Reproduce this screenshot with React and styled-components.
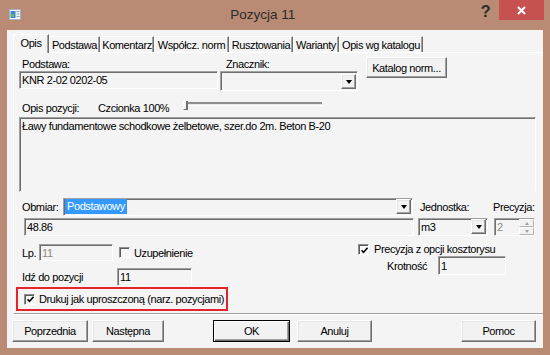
import styled, { createGlobalStyle, css } from "styled-components"

const GlobalStyle = createGlobalStyle`
    * { box-sizing: border-box; }
    body {
        margin: 0;
        font-family: "Liberation Sans", Arial, sans-serif;
        font-size: 11px;
        letter-spacing: -0.4px;
        color: #000;
    }
`

const tabs = [
    { label: "Opis", w: 36 },
    { label: "Podstawa", w: 51 },
    { label: "Komentarz", w: 54 },
    { label: "Współcz. norm", w: 75 },
    { label: "Rusztowania", w: 64 },
    { label: "Warianty", w: 46 },
    { label: "Opis wg katalogu", w: 84 },
]

const CheckMark = () => (
    <svg width="7" height="7" viewBox="0 0 7 7">
        <path d="M0.5 3.2 L2.5 5.4 L6.5 0.8" fill="none" stroke="#000" strokeWidth="1.6" />
    </svg>
)

const Check = ({ checked }) => <CheckBox>{checked && <CheckMark />}</CheckBox>

const Drop = () => (
    <DropButton>
        <Arrow />
    </DropButton>
)

const App = () => {
    return (
        <>
            <GlobalStyle />
            <Window>
                <TitleBar>
                    <AppIcon width="12" height="11" viewBox="0 0 12 11">
                        <rect x="0.5" y="0.5" width="11" height="10" fill="#f4f6f8" stroke="#9fb3c4" />
                        <rect x="1.5" y="2" width="5" height="7" fill="#3f86c8" />
                        <rect x="2" y="5" width="3" height="3" fill="#5fb870" />
                        <rect x="7.5" y="2" width="3" height="1" fill="#7fa6c6" />
                        <rect x="7.5" y="4.5" width="3" height="1" fill="#7fa6c6" />
                        <rect x="7.5" y="7" width="3" height="1" fill="#7fa6c6" />
                    </AppIcon>
                    <Title>Pozycja 11</Title>
                    <Help>?</Help>
                    <CloseButton>
                        <svg width="9" height="9" viewBox="0 0 9 9">
                            <path d="M1 1 L8 8 M8 1 L1 8" stroke="#fff" strokeWidth="2" />
                        </svg>
                    </CloseButton>
                </TitleBar>
                <Client>
                    <TabStrip>
                        {tabs.map((t, i) => (
                            <Tab key={t.label} $width={t.w} $active={i === 0}>{t.label}</Tab>
                        ))}
                    </TabStrip>
                    <Panel>
                        <Row $align="flex-start">
                            <Group $width={199}>
                                <Label $pad={3}>Podstawa:</Label>
                                <Field $width={199} $height={18}>KNR 2-02 0202-05</Field>
                            </Group>
                            <Group $width={138} $ml={2}>
                                <Label $pad={6}>Znacznik:</Label>
                                <Combo $width={138} $height={20}>
                                    <span />
                                    <Drop />
                                </Combo>
                            </Group>
                            <Button $width={81} $height={21} $ml={8}>Katalog norm...</Button>
                        </Row>
                        <Row $mt={10} $align="flex-start">
                            <Label $pad={3} $width={79}>Opis pozycji:</Label>
                            <Label $width={87}>Czcionka 100%</Label>
                            <Slider>
                                <Thumb />
                            </Slider>
                        </Row>
                        <TextArea>Ławy fundamentowe schodkowe żelbetowe, szer.do 2m. Beton B-20</TextArea>
                        <Row $mt={6}>
                            <Label $pad={3} $width={44}>Obmiar:</Label>
                            <Combo $width={350} $height={18} $align="center">
                                <Selected>Podstawowy</Selected>
                                <Drop />
                            </Combo>
                            <Label $ml={7} $width={73}>Jednostka:</Label>
                            <Label>Precyzja:</Label>
                        </Row>
                        <Row $mt={2}>
                            <Field $width={390} $height={18} $ml={5}>48.86</Field>
                            <Combo $width={70} $height={18} $ml={4} $align="center">
                                <span>m3</span>
                                <Drop />
                            </Combo>
                            <Spinner>
                                <SpinValue>2</SpinValue>
                                <SpinButtons>
                                    <SpinButton><SpinArrow $up /></SpinButton>
                                    <SpinButton><SpinArrow /></SpinButton>
                                </SpinButtons>
                            </Spinner>
                        </Row>
                        <Row $mt={8} $align="flex-start">
                            <Column $width={209}>
                                <Row>
                                    <Label $pad={3} $width={20}>Lp.</Label>
                                    <Field $width={74} $height={17} $muted>11</Field>
                                    <CheckItem $ml={6}>
                                        <Check />
                                        <span>Uzupełnienie</span>
                                    </CheckItem>
                                </Row>
                                <Row $mt={7}>
                                    <Label $pad={3} $width={98}>Idź do pozycji</Label>
                                    <Field $width={75} $height={18}>11</Field>
                                </Row>
                                <Highlight>
                                    <CheckItem>
                                        <Check checked />
                                        <span>Drukuj jak uproszczoną (narz. pozycjami)</span>
                                    </CheckItem>
                                </Highlight>
                            </Column>
                            <Column $ml={130}>
                                <CheckItem $tight>
                                    <Check checked />
                                    <span>Precyzja z opcji kosztorysu</span>
                                </CheckItem>
                                <Row $mt={1}>
                                    <Label $ml={29} $width={51}>Krotność</Label>
                                    <Field $width={68} $height={19}>1</Field>
                                </Row>
                            </Column>
                        </Row>
                    </Panel>
                    <ButtonBar>
                        <Button $width={76} $ml={5}>Poprzednia</Button>
                        <Button $width={72} $ml={4}>Następna</Button>
                        <Button $width={77} $ml={49} $primary>OK</Button>
                        <Button $width={75} $ml={7}>Anuluj</Button>
                        <Button $width={75} $ml={89}>Pomoc</Button>
                    </ButtonBar>
                </Client>
            </Window>
        </>
    )
}

export default App

const sunken = css`
    border: 1px solid;
    border-color: #a0a0a0 #ffffff #ffffff #a0a0a0;
    box-shadow: inset 1px 1px 0 #6d6d6d;
`

const raised = css`
    border: 1px solid;
    border-color: #ffffff #6d6d6d #6d6d6d #ffffff;
    box-shadow: inset -1px -1px 0 #a0a0a0, inset 1px 1px 0 #e6e6e6;
    background: #f2f2f2;
`

const Window = styled.div`
    width: 550px;
    height: 355px;
    background: #b98a74;
    display: flex;
    flex-direction: column;
    overflow: hidden;
`

const TitleBar = styled.div`
    height: 30px;
    flex-shrink: 0;
    display: flex;
    align-items: flex-start;
`

const AppIcon = styled.svg`
    margin: 9px 0 0 9px;
    flex-shrink: 0;
`

const Title = styled.div`
    flex: 1;
    text-align: center;
    padding-left: 24px;
    line-height: 30px;
    font-size: 13.5px;
    letter-spacing: 0;
    color: #2b2b2b;
`

const Help = styled.div`
    margin: 4px 9px 0 0;
    font-size: 16px;
    font-weight: bold;
    line-height: 16px;
    color: #2a2a2a;
`

const CloseButton = styled.div`
    width: 45px;
    height: 20px;
    margin-right: 6px;
    background: #c75050;
    display: flex;
    align-items: center;
    justify-content: center;
`

const Client = styled.div`
    margin: 0 7px;
    height: 318px;
    background: #f4f4f4;
    display: flex;
    flex-direction: column;
`

const TabStrip = styled.div`
    height: 22px;
    display: flex;
    align-items: flex-end;
    padding-left: 6px;
`

const Tab = styled.div`
    position: relative;
    z-index: ${(p) => (p.$active ? 1 : 0)};
    width: ${(p) => p.$width}px;
    height: ${(p) => (p.$active ? 19 : 16)}px;
    margin-bottom: ${(p) => (p.$active ? -1 : 0)}px;
    background: #f4f4f4;
    border-top: 1px solid #ffffff;
    border-left: 1px solid #ffffff;
    border-right: 1px solid #6d6d6d;
    box-shadow: inset -1px 0 0 #a0a0a0;
    display: flex;
    align-items: center;
    justify-content: center;
    padding-bottom: ${(p) => (p.$active ? 3 : 0)}px;
    white-space: nowrap;
`

const Panel = styled.div`
    margin-left: 6px;
    height: 262px;
    border-top: 1px solid #ffffff;
    border-left: 1px solid #ffffff;
    border-bottom: 1px solid #a0a0a0;
    box-shadow: 0 1px 0 #ffffff;
    padding: 4px 0 0 5px;
`

const Row = styled.div`
    display: flex;
    align-items: ${(p) => p.$align || "center"};
    margin-top: ${(p) => p.$mt || 0}px;
`

const Column = styled.div`
    display: flex;
    flex-direction: column;
    width: ${(p) => (p.$width ? `${p.$width}px` : "auto")};
    margin-left: ${(p) => p.$ml || 0}px;
`

const Group = styled.div`
    display: flex;
    flex-direction: column;
    width: ${(p) => p.$width}px;
    margin-left: ${(p) => p.$ml || 0}px;
`

const Label = styled.div`
    line-height: 14px;
    padding-left: ${(p) => p.$pad || 0}px;
    margin-left: ${(p) => p.$ml || 0}px;
    width: ${(p) => (p.$width ? `${p.$width}px` : "auto")};
    flex-shrink: 0;
    white-space: nowrap;
`

const Field = styled.div`
    ${sunken};
    width: ${(p) => p.$width}px;
    height: ${(p) => p.$height}px;
    margin-left: ${(p) => p.$ml || 0}px;
    padding-left: 2px;
    display: flex;
    align-items: center;
    flex-shrink: 0;
    color: ${(p) => (p.$muted ? "#8a8a8a" : "#000")};
`

const Combo = styled.div`
    ${sunken};
    width: ${(p) => p.$width}px;
    height: ${(p) => p.$height}px;
    margin-left: ${(p) => p.$ml || 0}px;
    padding: 0 1px 1px 2px;
    display: flex;
    align-items: ${(p) => p.$align || "flex-end"};
    justify-content: space-between;
    flex-shrink: 0;
`

const DropButton = styled.div`
    ${raised};
    width: 15px;
    height: 15px;
    display: flex;
    align-items: center;
    justify-content: center;
`

const Arrow = styled.div`
    width: 0;
    height: 0;
    border-left: 3.5px solid transparent;
    border-right: 3.5px solid transparent;
    border-top: 4px solid #000;
    margin-top: 1px;
`

const Selected = styled.span`
    background: #3399ff;
    color: #ffffff;
    padding: 1px 2px;
    margin-left: -1px;
    line-height: 13px;
`

const Button = styled.div`
    ${raised};
    ${(p) =>
        p.$primary &&
        css`
            border-color: #000;
            box-shadow: inset 1px 1px 0 #ffffff, inset -1px -1px 0 #6d6d6d, inset -2px -2px 0 #a0a0a0;
        `}
    width: ${(p) => p.$width}px;
    height: ${(p) => p.$height || 22}px;
    margin-left: ${(p) => p.$ml || 0}px;
    display: flex;
    align-items: center;
    justify-content: center;
    flex-shrink: 0;
    white-space: nowrap;
`

const Slider = styled.div`
    position: relative;
    width: 137px;
    height: 4px;
    margin-top: 1px;
    border-top: 2px solid #8e8e8e;
    border-bottom: 1px solid #ffffff;
    background: #e8e8e8;
`

const Thumb = styled.div`
    position: absolute;
    left: -2px;
    top: -3px;
    width: 5px;
    height: 9px;
    border-left: 1px solid #ffffff;
    border-right: 2px solid #6d6d6d;
    border-bottom: 1px solid #6d6d6d;
    background: #f4f4f4;
`

const TextArea = styled.div`
    ${sunken};
    width: 517px;
    height: 75px;
    margin-top: 2px;
    padding: 2px 2px;
    border-bottom-color: #f4f4f4;
    line-height: 13px;
`

const Spinner = styled.div`
    ${sunken};
    width: 41px;
    height: 18px;
    margin-left: 6px;
    display: flex;
    padding-left: 2px;
`

const SpinValue = styled.div`
    flex: 1;
    color: #8a8a8a;
    display: flex;
    align-items: center;
`

const SpinButtons = styled.div`
    width: 15px;
    display: flex;
    flex-direction: column;
`

const SpinButton = styled.div`
    flex: 1;
    border: 1px solid;
    border-color: #ffffff #b4b4b4 #b4b4b4 #ffffff;
    background: #f2f2f2;
    display: flex;
    align-items: center;
    justify-content: center;
`

const SpinArrow = styled.div`
    width: 0;
    height: 0;
    border-left: 2.5px solid transparent;
    border-right: 2.5px solid transparent;
    ${(p) => (p.$up ? "border-bottom" : "border-top")}: 3px solid #a0a0a0;
`

const CheckItem = styled.div`
    display: flex;
    align-items: center;
    gap: ${(p) => (p.$tight ? 5 : 4)}px;
    margin-left: ${(p) => p.$ml || 0}px;
    line-height: ${(p) => (p.$tight ? 11 : 14)}px;
    white-space: nowrap;
`

const CheckBox = styled.div`
    width: 11px;
    height: 11px;
    flex-shrink: 0;
    border: 1px solid;
    border-color: #8e8e8e #ffffff #ffffff #8e8e8e;
    box-shadow: inset 1px 1px 0 #5a5a5a;
    background: #f8f8f8;
    display: flex;
    align-items: center;
    justify-content: center;
    padding: 1px 0 0 1px;
`

const Highlight = styled.div`
    width: 212px;
    height: 24px;
    margin: 1px 0 0 -3px;
    border: 2px solid #e4232b;
    padding-left: 6px;
    display: flex;
    align-items: center;
`

const ButtonBar = styled.div`
    display: flex;
    margin-top: 6px;
`
